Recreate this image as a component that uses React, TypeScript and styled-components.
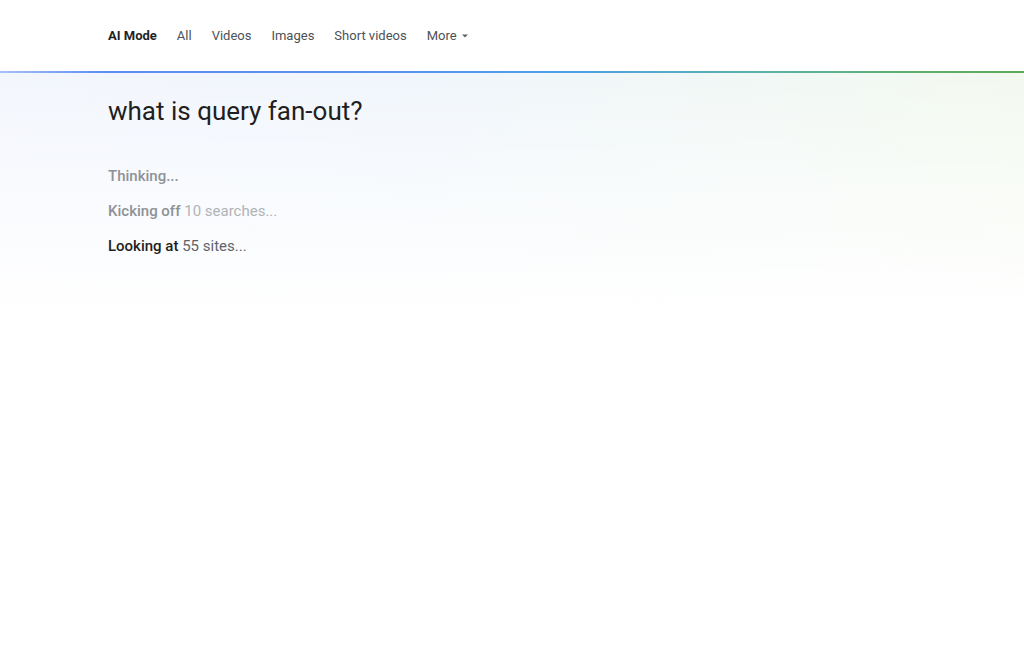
import React from "react";
import styled, { createGlobalStyle } from "styled-components";

const Global = createGlobalStyle`
  html, body {
    margin: 0;
    padding: 0;
    background: #fff;
    font-family: Roboto, "Noto Sans", Arial, sans-serif;
  }
`;

const tabs = ["All", "Videos", "Images", "Short videos"];

export default function App() {
  return (
    <>
      <Global />
      <Page>
        <Header>
          <Tab active>AI Mode</Tab>
          {tabs.map((t) => (
            <Tab key={t}>{t}</Tab>
          ))}
          <Tab>
            More
            <Caret viewBox="0 0 10 10">
              <path d="M2 3.5 L5 6.5 L8 3.5 Z" fill="#5f6368" />
            </Caret>
          </Tab>
        </Header>
        <Rule />
        <Main>
          <Query>what is query fan-out?</Query>
          <Steps>
            <Step tone="faded">
              <Lead>Thinking...</Lead>
            </Step>
            <Step tone="faded">
              <Lead>Kicking off</Lead> <Rest>10 searches...</Rest>
            </Step>
            <Step tone="active">
              <Lead>Looking at</Lead> <Rest>55 sites...</Rest>
            </Step>
          </Steps>
        </Main>
      </Page>
    </>
  );
}

const Page = styled.div`
  min-height: 645px;
  display: flex;
  flex-direction: column;
`;

const Header = styled.nav`
  height: 71px;
  display: flex;
  align-items: center;
  padding-left: 108px;
  gap: 20px;
  background: #fff;
`;

const Tab = styled.span<{ active?: boolean }>`
  display: inline-flex;
  align-items: center;
  font-size: 13px;
  font-weight: ${(p) => (p.active ? 700 : 400)};
  color: ${(p) => (p.active ? "#1f1f1f" : "#4d5156")};
`;

const Caret = styled.svg`
  width: 10px;
  height: 10px;
  margin-left: 3px;
`;

const Rule = styled.div`
  height: 2px;
  background: linear-gradient(
    90deg,
    #a8c0f4 0%,
    #5e8ef5 10%,
    #5a90f0 35%,
    #4fa0e8 55%,
    #5db3a8 75%,
    #5fae6a 90%,
    #5caa5a 100%
  );
`;

const Main = styled.main`
  flex: 1;
  padding: 22px 108px 0;
  background:
    linear-gradient(180deg, rgba(255, 255, 255, 0) 0px, #fff 240px),
    linear-gradient(90deg, #f3f6fd 0%, #f1f6fc 40%, #f2f8f4 80%, #f3f9ef 100%);
  background-size: 100% 260px;
  background-repeat: no-repeat;
`;

const Query = styled.h1`
  margin: 0;
  font-size: 26px;
  font-weight: 400;
  color: #1f1f1f;
  line-height: 32px;
`;

const Steps = styled.div`
  margin-top: 39px;
  display: flex;
  flex-direction: column;
  gap: 14px;
`;

const Lead = styled.span``;
const Rest = styled.span``;

const Step = styled.div<{ tone: "faded" | "active" }>`
  font-size: 15px;
  line-height: 21px;
  ${Lead} {
    font-weight: 500;
    color: ${(p) => (p.tone === "active" ? "#1f1f1f" : "#8e9297")};
  }
  ${Rest} {
    color: ${(p) => (p.tone === "active" ? "#5f6368" : "#b0b3b7")};
  }
`;
